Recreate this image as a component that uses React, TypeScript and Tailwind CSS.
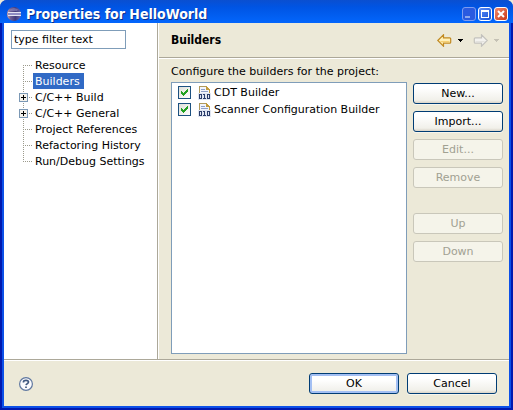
import { useState } from "react";
import type { ReactNode } from "react";

type Page = { label: string; expandable?: boolean };

const pages: Page[] = [
  { label: "Resource" },
  { label: "Builders" },
  { label: "C/C++ Build", expandable: true },
  { label: "C/C++ General", expandable: true },
  { label: "Project References" },
  { label: "Refactoring History" },
  { label: "Run/Debug Settings" },
];

function EclipseLogo() {
  return (
    <svg width="16" height="16" viewBox="0 0 16 16" aria-hidden="true">
      <defs>
        <linearGradient id="orb" x1="0" y1="0" x2="1" y2="0">
          <stop offset="0" stopColor="#d9a9a0" />
          <stop offset="0.25" stopColor="#6f5f96" />
          <stop offset="0.6" stopColor="#413a7c" />
          <stop offset="1" stopColor="#6d69ac" />
        </linearGradient>
      </defs>
      <circle cx="8" cy="8" r="7" fill="url(#orb)" />
      <path d="M4 3.500Q8 .5 12 3.500L11 5H4z" fill="#8f8abf" opacity="0.6" />
      <path d="M2 6.500h13M2 9.500h13" stroke="#e4e3f3" />
      <path d="M2 8h13" stroke="#8f8cc4" strokeWidth="2" />
    </svg>
  );
}

function TreeBranch({ first, last, expandable }: { first: boolean; last: boolean; expandable?: boolean }) {
  return (
    <svg className="shrink-0" width="14" height="16" viewBox="0 0 14 16" shapeRendering="crispEdges" aria-hidden="true">
      <path d={`M4.5 ${first ? 8 : 0}V${last ? 9 : 16}`} stroke="#9c9a8c" strokeDasharray="1 1" />
      <path d="M4 8.5H13" stroke="#9c9a8c" strokeDasharray="1 1" />
      {expandable && (
        <>
          <rect x="0.5" y="4.5" width="8" height="8" fill="#f4f2ec" stroke="#7b98b5" />
          <path d="M2 8.5h5M4.5 6v5" stroke="#000" />
        </>
      )}
    </svg>
  );
}

function BuilderIcon() {
  return (
    <svg width="13" height="14" viewBox="0 0 13 14" shapeRendering="crispEdges" aria-hidden="true">
      <path d="M1 0h7l4 4v9H1z" fill="#f3f5fb" />
      <path d="M1.5 8V.5H8" fill="none" stroke="#b09a5c" />
      <path d="M8 0h1v1h1v1h1v1h1v5h-1V4H8z" fill="#c29b3d" />
      <path d="M3 3.5h4M3 5.500h7" stroke="#8ea0c8" />
      <path d="M0 7h13v7H0z" fill="#dfe5f1" />
      <path d="M1.500 8.500h2v4h-2zM9.500 8.500h2v4h-2z" fill="none" stroke="#2a3d6b" />
      <path d="M5 8h2v4h1v1H5v-1h1V9H5z" fill="#2a3d6b" />
    </svg>
  );
}

function Arrow({ muted }: { muted?: boolean }) {
  return (
    <svg
      className={muted ? "-scale-x-100" : ""}
      width="15"
      height="13"
      viewBox="0 0 15 13"
      aria-hidden="true"
    >
      <path
        d="M.8 6.5 6.5.8v3h6.2q1 0 1 1v3.4q0 1-1 1H6.5v3z"
        fill={muted ? "#f3f2ef" : "#fff0b8"}
        stroke={muted ? "#c3c2bd" : "#c18a22"}
        strokeWidth="1.2"
      />
      <path d="M3 7h9.500v1.300H4z" fill={muted ? "#e3e2de" : "#f5cf72"} />
    </svg>
  );
}

function Caret({ muted }: { muted?: boolean }) {
  return (
    <svg width="5" height="3" viewBox="0 0 5 3" shapeRendering="crispEdges" aria-hidden="true">
      <path d="M0 0h5v1H4v1H3v1H2V2H1V1H0z" fill={muted ? "#c5c2b5" : "#000"} />
    </svg>
  );
}

function PushButton({ children, disabled, primary }: { children: ReactNode; disabled?: boolean; primary?: boolean }) {
  const look = disabled
    ? "border-[#c9c7ba] bg-[#f5f4ea] text-[#a1a192]"
    : primary
      ? "border-[#003c74] bg-linear-to-b from-white from-30% to-[#eeede7] shadow-[inset_0_0_0_2px_#a3bff3,inset_0_-2px_0_0_#7c9de0]"
      : "border-[#003c74] bg-linear-to-b from-white from-20% via-[#f1f0ea] via-85% to-[#d9d4c8] shadow-[0_1px_0_#f7f5ec]";
  return (
    <button type="button" disabled={disabled} className={`h-[21px] w-[90px] rounded-[3px] border leading-4 ${look}`}>
      {children}
    </button>
  );
}

function CheckItem({ label }: { label: string }) {
  const [on, setOn] = useState(true);
  return (
    <li>
      <label className="flex h-[17px] items-center">
        <span className="grid shrink-0">
          <input
            type="checkbox"
            checked={on}
            onChange={() => setOn(!on)}
            className="col-start-1 row-start-1 size-[13px] appearance-none border border-[#1c5180] bg-linear-to-br from-[#dfdfd8] to-white"
          />
          {on && (
            <svg className="pointer-events-none col-start-1 row-start-1" width="13" height="13" viewBox="0 0 13 13" shapeRendering="crispEdges" aria-hidden="true">
              <path d="M3 5h1v1h1v1h1V6h1V5h1V4h1V3h1v3H9v1H8v1H7v1H6v1H5V9H4V8H3z" fill="#21a121" />
            </svg>
          )}
        </span>
        <span className="mr-[3px] ml-[7px]">
          <BuilderIcon />
        </span>
        <span className="leading-[18px]">{label}</span>
      </label>
    </li>
  );
}

function TitleBar() {
  return (
    <header className="z-10 flex h-[23px] items-center bg-linear-to-b from-[#0a4fd0] via-[#0054e3] via-30% to-[#0366fc] pt-1 pr-[5px] pl-[6px]">
      <EclipseLogo />
      <h1 className="ml-1 flex-1 font-['DejaVu_Sans_Condensed','DejaVu_Sans',sans-serif] text-[14px] leading-4 font-bold text-white [text-shadow:1px_1px_#0b2f8c]">
        Properties for HelloWorld
      </h1>
      <div className="flex gap-[2px]">
        <button type="button" disabled aria-label="Minimize" className="rounded-[3px] border border-[#7d9cf0] bg-[#2a5ae0]">
          <svg width="12" height="12" viewBox="0 0 12 12"><path d="M2 8h5v2H2z" fill="#8ca8ee" /></svg>
        </button>
        <button type="button" aria-label="Maximize" className="rounded-[3px] border border-white bg-linear-to-br from-[#5c8cf5] to-[#1450d8]">
          <svg width="12" height="12" viewBox="0 0 12 12" shapeRendering="crispEdges"><path d="M2 2h8v8H2zM3 4v5h6V4z" fill="#fff" fillRule="evenodd" /></svg>
        </button>
        <button type="button" aria-label="Close" className="rounded-[3px] border border-white bg-linear-to-br from-[#f0886a] to-[#c9330d]">
          <svg width="12" height="12" viewBox="0 0 12 12"><path d="m3 3 6 6M9 3 3 9" stroke="#fff" strokeWidth="2" /></svg>
        </button>
      </div>
    </header>
  );
}

function PageTree() {
  const [selected, setSelected] = useState("Builders");
  return (
    <nav className="w-[154px] shrink-0 border-r border-[#aca899] bg-white pt-[7px] pl-[7px]">
      <input
        aria-label="Filter"
        defaultValue="type filter text"
        className="block h-[19px] w-[115px] border border-[#7f9db9] bg-white px-[2px] outline-none"
      />
      <ul className="mt-2 pl-2">
        {pages.map((page, i) => (
          <li key={page.label} className="flex h-4">
            <TreeBranch first={i === 0} last={i === pages.length - 1} expandable={page.expandable} />
            <button
              type="button"
              onClick={() => setSelected(page.label)}
              className={`h-4 pr-1 pl-[2px] leading-[18px] whitespace-nowrap ${page.label === selected ? "bg-[#316ac5] text-white" : ""}`}
            >
              {page.label}
            </button>
          </li>
        ))}
      </ul>
    </nav>
  );
}

export default function App() {
  return (
    <div className="bg-[#ece9d8]">
      <div className="flex min-h-screen flex-col overflow-hidden rounded-t-[7px] bg-[#0a3fd8] font-['DejaVu_Sans',Verdana,sans-serif] text-[11px] leading-4 text-black">
        <TitleBar />
        <div className="mx-1 mb-1 flex flex-1 flex-col bg-[#ece9d8] shadow-[0_0_0_2px_#0c50e8,0_0_0_4px_#0019b0]">
          <div className="flex flex-1 border-b border-[#aca899]">
            <PageTree />
            <main className="flex flex-1 flex-col border-l border-white">
              <div className="flex h-[35px] items-center border-b border-[#aca899] pr-[10px] pl-3">
                <h2 className="flex-1 font-['DejaVu_Sans_Condensed','DejaVu_Sans',sans-serif] text-[12px] leading-[18px] font-bold">Builders</h2>
                <div className="flex items-center">
                  <button type="button" aria-label="Back"><Arrow /></button>
                  <button type="button" aria-label="Back history" className="ml-[6px]"><Caret /></button>
                  <button type="button" disabled aria-label="Forward" className="ml-[10px]"><Arrow muted /></button>
                  <button type="button" disabled aria-label="Forward history" className="ml-[6px]"><Caret muted /></button>
                </div>
              </div>
              <section className="flex flex-1 flex-col border-t border-white pt-1 pr-[6px] pb-[5px] pl-3">
                <h3 id="builders-label" className="h-[19px] leading-[18px]">Configure the builders for the project:</h3>
                <div className="flex flex-1 gap-[6px]">
                  <ul aria-labelledby="builders-label" className="flex-1 border border-[#7f9db9] bg-white pt-[1px] pl-[6px]">
                    <CheckItem label="CDT Builder" />
                    <CheckItem label="Scanner Configuration Builder" />
                  </ul>
                  <div className="flex flex-col gap-[7px] pt-[1px]">
                    <PushButton>New...</PushButton>
                    <PushButton>Import...</PushButton>
                    <PushButton disabled>Edit...</PushButton>
                    <PushButton disabled>Remove</PushButton>
                    <div className="mt-[18px] flex flex-col gap-[7px]">
                      <PushButton disabled>Up</PushButton>
                      <PushButton disabled>Down</PushButton>
                    </div>
                  </div>
                </div>
              </section>
            </main>
          </div>
          <footer className="flex items-center gap-2 border-t border-white pt-3 pr-3 pb-3 pl-[14px]">
            <button type="button" aria-label="Help" className="mr-auto">
              <svg width="16" height="16" viewBox="0 0 16 16">
                <circle cx="8" cy="8" r="6.4" fill="#fbfbfd" stroke="#60789f" strokeWidth="1.2" />
                <path d="M5.500 6.400V5.700Q5.700 4.300 8 4.300q2.500 0 2.500 1.700 0 1-1.300 1.700-1 .5-1.100 1.500M8 10.500v1.600" fill="none" stroke="#40587f" strokeWidth="1.700" />
              </svg>
            </button>
            <PushButton primary>OK</PushButton>
            <PushButton>Cancel</PushButton>
          </footer>
        </div>
      </div>
    </div>
  );
}
